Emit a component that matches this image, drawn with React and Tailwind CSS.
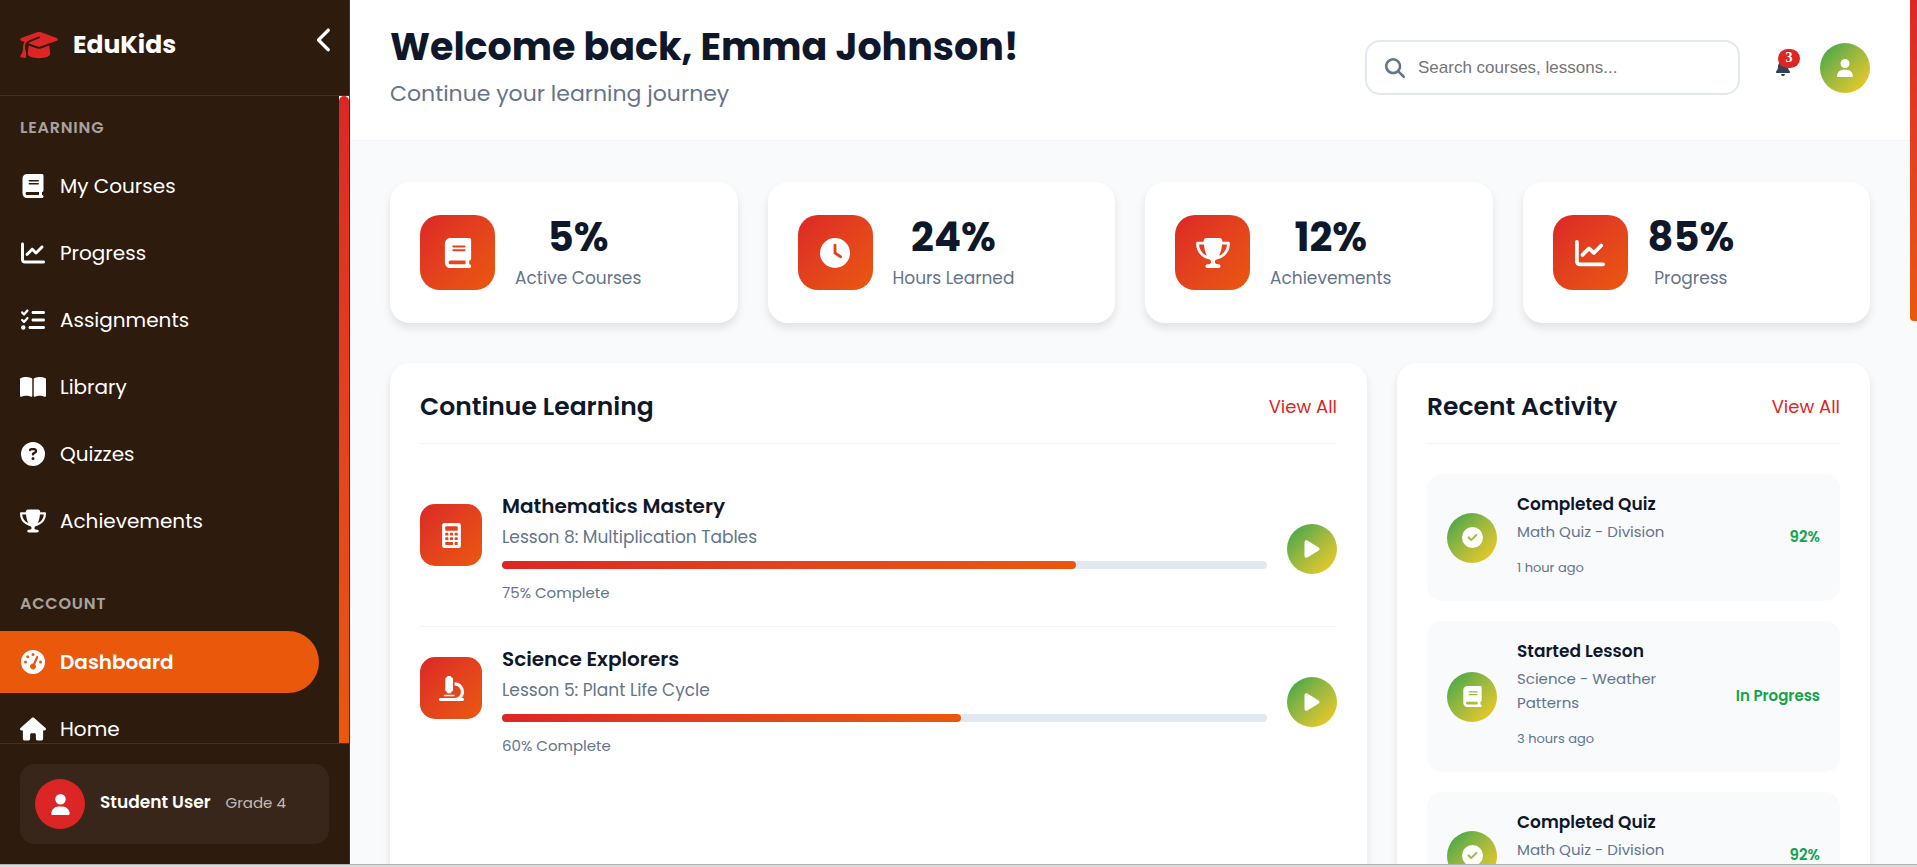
import {
  FaBell, FaBook, FaBookOpen, FaChartLine, FaChevronLeft, FaCircleCheck, FaCircleQuestion,
  FaClock, FaGaugeHigh, FaGraduationCap, FaHouse, FaListCheck, FaMagnifyingGlass, FaMicroscope, FaPlay,
  FaTrophy, FaUser,
} from 'react-icons/fa6';

function CalculatorIcon({ className }) {
  return (
    <svg viewBox="0 0 384 512" fill="currentColor" fillRule="evenodd" className={className} aria-hidden="true">
      <path d="M48 0h288a48 48 0 0 1 48 48v416a48 48 0 0 1-48 48H48a48 48 0 0 1-48-48V48A48 48 0 0 1 48 0ZM80 64a16 16 0 0 0-16 16v64a16 16 0 0 0 16 16h224a16 16 0 0 0 16-16V80a16 16 0 0 0-16-16ZM76 200a12 12 0 0 0-12 12v32a12 12 0 0 0 12 12h40a12 12 0 0 0 12-12v-32a12 12 0 0 0-12-12ZM172 200a12 12 0 0 0-12 12v32a12 12 0 0 0 12 12h40a12 12 0 0 0 12-12v-32a12 12 0 0 0-12-12ZM268 200a12 12 0 0 0-12 12v32a12 12 0 0 0 12 12h40a12 12 0 0 0 12-12v-32a12 12 0 0 0-12-12ZM76 292a12 12 0 0 0-12 12v32a12 12 0 0 0 12 12h40a12 12 0 0 0 12-12v-32a12 12 0 0 0-12-12ZM172 292a12 12 0 0 0-12 12v32a12 12 0 0 0 12 12h40a12 12 0 0 0 12-12v-32a12 12 0 0 0-12-12ZM268 292a12 12 0 0 0-12 12v32a12 12 0 0 0 12 12h40a12 12 0 0 0 12-12v-32a12 12 0 0 0-12-12ZM76 388a12 12 0 0 0-12 12v36a12 12 0 0 0 12 12h136a12 12 0 0 0 12-12v-36a12 12 0 0 0-12-12ZM268 388a12 12 0 0 0-12 12v36a12 12 0 0 0 12 12h40a12 12 0 0 0 12-12v-36a12 12 0 0 0-12-12Z" />
    </svg>
  );
}

const learningLinks = [
  { label: 'My Courses', Icon: FaBook },
  { label: 'Progress', Icon: FaChartLine },
  { label: 'Assignments', Icon: FaListCheck },
  { label: 'Library', Icon: FaBookOpen },
  { label: 'Quizzes', Icon: FaCircleQuestion },
  { label: 'Achievements', Icon: FaTrophy },
];

const accountLinks = [
  { label: 'Dashboard', Icon: FaGaugeHigh, active: true },
  { label: 'Home', Icon: FaHouse },
];

const stats = [
  { value: '5%', label: 'Active Courses', Icon: FaBook },
  { value: '24%', label: 'Hours Learned', Icon: FaClock },
  { value: '12%', label: 'Achievements', Icon: FaTrophy },
  { value: '85%', label: 'Progress', Icon: FaChartLine },
];

const courses = [
  { title: 'Mathematics Mastery', lesson: 'Lesson 8: Multiplication Tables', percent: 75, Icon: CalculatorIcon },
  { title: 'Science Explorers', lesson: 'Lesson 5: Plant Life Cycle', percent: 60, Icon: FaMicroscope },
];

const activities = [
  { title: 'Completed Quiz', detail: 'Math Quiz - Division', time: '1 hour ago', result: '92%', Icon: FaCircleCheck },
  { title: 'Started Lesson', detail: 'Science - Weather Patterns', time: '3 hours ago', result: 'In Progress', Icon: FaBook },
  { title: 'Completed Quiz', detail: 'Math Quiz - Division', time: '1 hour ago', result: '92%', Icon: FaCircleCheck },
];

function NavSection({ title, links }) {
  return (
    <section className="mb-10">
      <h2 className="mb-[15px] px-5 text-base leading-6 font-semibold tracking-wider text-white/60 uppercase">{title}</h2>
      <ul className="flex flex-col gap-[5px]">
        {links.map(({ label, Icon, active }) => (
          <li key={label} className="pr-5">
            <a
              href="#"
              aria-current={active ? 'page' : undefined}
              className={
                active
                  ? 'flex h-[62px] items-center gap-3.5 rounded-r-full bg-[#ea580c] pl-5 text-xl font-semibold text-white'
                  : 'flex h-[62px] items-center gap-3.5 rounded-r-full pl-5 text-xl text-white'
              }
            >
              <Icon className="h-6 w-[26px]" />
              {label}
            </a>
          </li>
        ))}
      </ul>
    </section>
  );
}

function Sidebar() {
  return (
    <aside className="relative flex w-[350px] shrink-0 flex-col border-r border-white/10 bg-[#2d1b0e] text-white">
      <div className="flex h-24 shrink-0 items-center gap-[15px] border-b border-white/10 px-5 pb-1.5">
        <FaGraduationCap className="h-[30px] w-[38px] text-[#dc2626]" />
        <span className="text-[25px] font-bold">EduKids</span>
      </div>
      <button type="button" aria-label="Collapse sidebar" className="absolute top-5 right-1 flex size-10 items-center justify-center">
        <FaChevronLeft className="size-[26px]" />
      </button>
      <div className="flex min-h-0 flex-1">
        <nav className="min-w-0 flex-1 overflow-hidden pt-5">
          <NavSection title="Learning" links={learningLinks} />
          <NavSection title="Account" links={accountLinks} />
        </nav>
        <div className="w-2.5 bg-white">
          <div className="h-full rounded-t-full bg-linear-to-b from-[#dc2626] to-[#ea580c]" />
        </div>
      </div>
      <div className="shrink-0 border-t border-white/10 p-5">
        <div className="flex h-20 items-center gap-[15px] rounded-[15px] bg-white/5 px-[15px]">
          <span className="flex size-[50px] items-center justify-center rounded-full bg-[#dc2626]">
            <FaUser className="size-[21px]" />
          </span>
          <div className="flex items-center gap-[15px] pb-0.5">
            <span className="text-[17px] font-semibold">Student User</span>
            <span className="text-[15px] text-white/70">Grade 4</span>
          </div>
        </div>
      </div>
    </aside>
  );
}

function Header() {
  return (
    <header className="flex items-center justify-between border-b border-slate-100 bg-white px-10 pt-[21px] pb-[26px]">
      <div>
        <h1 className="text-[38px] leading-[52px] font-bold text-[#0f172a]">Welcome back, Emma Johnson!</h1>
        <p className="text-[22px] leading-[41px] text-[#64748b]">Continue your learning journey</p>
      </div>
      <div className="flex items-center">
        <label className="flex h-[55px] w-[375px] items-center gap-[13px] rounded-[15px] border-2 border-[#e2e8f0] px-[18px]">
          <FaMagnifyingGlass className="size-5 text-[#64748b]" />
          <input
            type="search"
            aria-label="Search"
            placeholder="Search courses, lessons..."
            className="min-w-0 flex-1 bg-transparent font-['Liberation_Sans',Arial,sans-serif] text-[17px] outline-none placeholder:text-[#757575]"
          />
        </label>
        <button type="button" aria-label="Notifications" className="relative mr-[30px] ml-9 text-[#334155]">
          <FaBell className="h-4 w-3.5" />
          <span className="absolute bottom-2 left-0.5 flex h-[19px] w-[22px] items-center justify-center rounded-full bg-[#dc2626] font-['Liberation_Serif',serif] text-sm font-bold text-white">
            3
          </span>
        </button>
        <button
          type="button"
          aria-label="Profile"
          className="flex size-[50px] items-center justify-center rounded-full bg-linear-to-br from-[#16a34a] to-[#facc15] text-white"
        >
          <FaUser className="size-[18px]" />
        </button>
      </div>
    </header>
  );
}

function StatCard({ value, label, Icon }) {
  return (
    <div className="flex items-center gap-5 rounded-[20px] bg-white px-[30px] py-[29px] shadow-[0_5px_8px_rgba(0,0,0,0.1)]">
      <div className="flex size-[75px] shrink-0 items-center justify-center rounded-[20px] bg-linear-to-br from-[#dc2626] to-[#ea580c] text-white">
        <Icon className="h-[30px] w-[34px]" />
      </div>
      <div className="text-center">
        <div className="text-[40px] leading-[52px] font-bold text-[#0f172a]">{value}</div>
        <div className="text-[17px] leading-[31px] text-[#64748b]">{label}</div>
      </div>
    </div>
  );
}

function Panel({ title, children }) {
  return (
    <section className="rounded-[20px] bg-white px-[30px] pt-7 pb-[30px] shadow-[0_5px_8px_rgba(0,0,0,0.1)]">
      <div className="mb-[30px] flex items-center justify-between border-b border-slate-100 pb-5">
        <h2 className="text-[25px] leading-8 font-semibold text-[#0f172a]">{title}</h2>
        <a href="#" className="text-lg leading-8 text-[#dc2626]">
          View All
        </a>
      </div>
      {children}
    </section>
  );
}

function CourseRow({ title, lesson, percent, Icon }) {
  return (
    <li className="flex items-center gap-5 border-b border-slate-100 pt-[17px] pb-5 last:border-b-0">
      <div className="mt-[13px] flex size-[62px] shrink-0 items-center justify-center self-start rounded-[15px] bg-linear-to-br from-[#dc2626] to-[#ea580c] text-white">
        <Icon className="size-[25px]" />
      </div>
      <div className="min-w-0 flex-1">
        <h3 className="text-xl leading-[31px] font-semibold text-[#0f172a]">{title}</h3>
        <p className="text-[17px] leading-[31px] text-[#64748b]">{lesson}</p>
        <div className="mt-2 h-2 rounded-full bg-[#e2e8f0]">
          <div className="h-full rounded-full bg-linear-to-r from-[#dc2626] to-[#ea580c]" style={{ width: `${percent}%` }} />
        </div>
        <p className="mt-2.5 text-[15px] leading-[27px] text-[#64748b]">{percent}% Complete</p>
      </div>
      <button
        type="button"
        aria-label={`Resume ${title}`}
        className="flex size-[50px] shrink-0 items-center justify-center rounded-full bg-linear-to-br from-[#16a34a] to-[#facc15] text-white"
      >
        <FaPlay className="size-5" />
      </button>
    </li>
  );
}

function ActivityRow({ title, detail, time, result, Icon }) {
  return (
    <li className="flex items-center gap-5 rounded-[15px] bg-[#f8fafc] px-5 py-4">
      <div className="flex size-[50px] shrink-0 items-center justify-center rounded-full bg-linear-to-br from-[#16a34a] to-[#facc15] text-white">
        <Icon className="size-[21px]" />
      </div>
      <div className="min-w-0 flex-1 pb-[7px]">
        <h3 className="text-[17px] leading-7 font-semibold text-[#0f172a]">{title}</h3>
        <p className="mt-0.5 max-w-[180px] text-[15px] leading-6 text-[#64748b]">{detail}</p>
        <p className="mt-3.5 text-[13px] leading-5 text-[#64748b]">{time}</p>
      </div>
      <span className="text-[15px] font-semibold text-[#16a34a]">{result}</span>
    </li>
  );
}

export default function App() {
  return (
    <div className="flex h-screen flex-col overflow-hidden bg-[#f8fafc] font-[Poppins,Inter,sans-serif]">
      <div className="flex min-h-0 flex-1">
        <Sidebar />
        <main className="min-w-0 flex-1 overflow-hidden">
          <Header />
          <div className="flex flex-col gap-10 px-10 pt-[41px]">
            <div className="grid grid-cols-4 gap-[30px]">
              {stats.map((stat) => (
                <StatCard key={stat.label} {...stat} />
              ))}
            </div>
            <div className="grid grid-cols-[minmax(0,977fr)_minmax(0,473fr)] gap-[30px]">
              <Panel title="Continue Learning">
                <ul>
                  {courses.map((course) => (
                    <CourseRow key={course.title} {...course} />
                  ))}
                </ul>
              </Panel>
              <Panel title="Recent Activity">
                <ul className="flex flex-col gap-5">
                  {activities.map((activity, index) => (
                    <ActivityRow key={index} {...activity} />
                  ))}
                </ul>
              </Panel>
            </div>
          </div>
        </main>
        <div className="w-[7px] shrink-0">
          <div className="h-[321px] rounded-bl-[4px] bg-linear-to-b from-[#dc2626] to-[#ea580c]" />
        </div>
      </div>
      <div className="h-[3px] shrink-0 border-t border-[#b0b0b0] bg-[#d8d8d8]" />
    </div>
  );
}
